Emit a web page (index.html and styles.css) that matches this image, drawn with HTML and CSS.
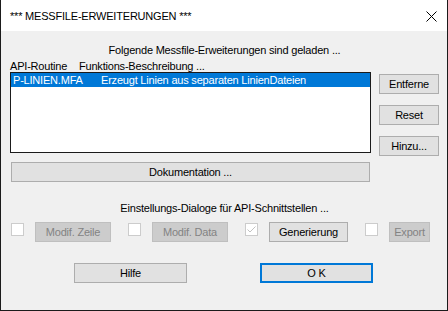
FILE: index.html
```html
<!DOCTYPE html>
<html lang="de">

<head>
  <meta charset="UTF-8">
  <title>Messfile-Erweiterungen</title>
  <link rel="stylesheet" href="styles.css">
</head>

<body>
  <div class="window">
    <div class="titlebar">
      <span class="title">*** MESSFILE-ERWEITERUNGEN ***</span>
      <svg class="close" width="11" height="11" viewBox="0 0 11 11">
        <path d="M0.5 0.5L10.5 10.5M10.5 0.5L0.5 10.5" stroke="#000" stroke-width="1" fill="none" />
      </svg>
    </div>
    <div class="content">
      <p class="heading">Folgende Messfile-Erweiterungen sind geladen ...</p>
      <div class="cols">
        <span class="col-api">API-Routine</span>
        <span>Funktions-Beschreibung ...</span>
      </div>
      <div class="main">
        <div class="list">
          <div class="row selected">
            <span class="row-api">P-LINIEN.MFA</span>
            <span>Erzeugt Linien aus separaten LinienDateien</span>
          </div>
        </div>
        <div class="side">
          <button class="btn side-btn">Entferne</button>
          <button class="btn side-btn">Reset</button>
          <button class="btn side-btn">Hinzu...</button>
        </div>
      </div>
      <button class="btn doc">Dokumentation ...</button>
      <p class="heading sub">Einstellungs-Dialoge für API-Schnittstellen ...</p>
      <div class="options">
        <div class="opt">
          <span class="check"></span>
          <button class="btn disabled w-zeile">Modif. Zeile</button>
        </div>
        <div class="opt">
          <span class="check"></span>
          <button class="btn disabled w-data">Modif. Data</button>
        </div>
        <div class="opt">
          <span class="check">
            <svg width="11" height="11" viewBox="0 0 11 11">
              <path d="M1.5 5.5L4 8L9.5 2.5" stroke="#c2c2c2" stroke-width="1" fill="none" />
            </svg>
          </span>
          <button class="btn w-gen">Generierung</button>
        </div>
        <div class="opt">
          <span class="check"></span>
          <button class="btn disabled w-export">Export</button>
        </div>
      </div>
      <div class="actions">
        <button class="btn action">Hilfe</button>
        <button class="btn action default">O K</button>
      </div>
    </div>
  </div>
</body>

</html>
```

FILE: styles.css
```css
body {
  margin: 0;
  padding: 0;
  background: #fff;
  font-family: "Liberation Sans", Arial, sans-serif;
  font-size: 11px;
  letter-spacing: -0.2px;
  color: #000;
}

.window {
  width: 448px;
  height: 311px;
  box-sizing: border-box;
  border: 1px solid #1b1b1b;
  border-top: none;
  background: #f0f0f0;
}

.titlebar {
  height: 31px;
  background: #fff;
  display: flex;
  align-items: center;
  padding-left: 9px;
  padding-right: 10px;
}

.title {
  flex: 1;
  font-size: 11px;
  letter-spacing: -0.2px;
  margin-top: 1px;
}

.close {
  display: block;
  margin-top: 1px;
}

.content {
  padding: 13px 8px 0 9px;
}

.heading {
  margin: 0;
  text-align: center;
  line-height: 13px;
}

.cols {
  margin-top: 4px;
  line-height: 11px;
  display: flex;
}

.col-api {
  width: 69px;
}

.main {
  display: flex;
  height: 84px;
}

.list {
  width: 361px;
  height: 81px;
  box-sizing: border-box;
  border: 1px solid #1b1b1b;
  background: #fff;
}

.row {
  height: 14px;
  line-height: 14px;
  padding-left: 2px;
  display: flex;
}

.row.selected {
  background: #0078d7;
  color: #fff;
}

.row-api {
  width: 88px;
}

.side {
  margin-left: 8px;
  padding-top: 2px;
  display: flex;
  flex-direction: column;
  gap: 11px;
}

.btn {
  height: 20px;
  box-sizing: border-box;
  padding: 0;
  margin: 0;
  border: 1px solid #adadad;
  background: #e1e1e1;
  font-family: "Liberation Sans", Arial, sans-serif;
  font-size: 11px;
  letter-spacing: -0.2px;
  line-height: 18px;
  color: #000;
  text-align: center;
}

.btn.disabled {
  background: #cccccc;
  border-color: #bfbfbf;
  color: #838383;
}

.side-btn {
  width: 60px;
}

.doc {
  display: block;
  width: 359px;
  margin: 6px 0 0 1px;
}

.sub {
  margin-top: 20px;
}

.options {
  display: flex;
  gap: 17px;
  margin-top: 7px;
  padding-left: 1px;
}

.opt {
  display: flex;
  align-items: flex-start;
  gap: 11px;
}

.check {
  width: 13px;
  height: 13px;
  box-sizing: border-box;
  margin-top: 1px;
  border: 1px solid #cccccc;
  background: #fff;
  display: flex;
}

.w-zeile,
.w-data {
  width: 76px;
}

.w-gen {
  width: 79px;
}

.w-export {
  width: 41px;
}

.actions {
  display: flex;
  gap: 73px;
  margin-top: 21px;
  padding-left: 64px;
}

.action {
  width: 113px;
}

.action.default {
  border: 2px solid #0078d7;
  line-height: 16px;
}
```
